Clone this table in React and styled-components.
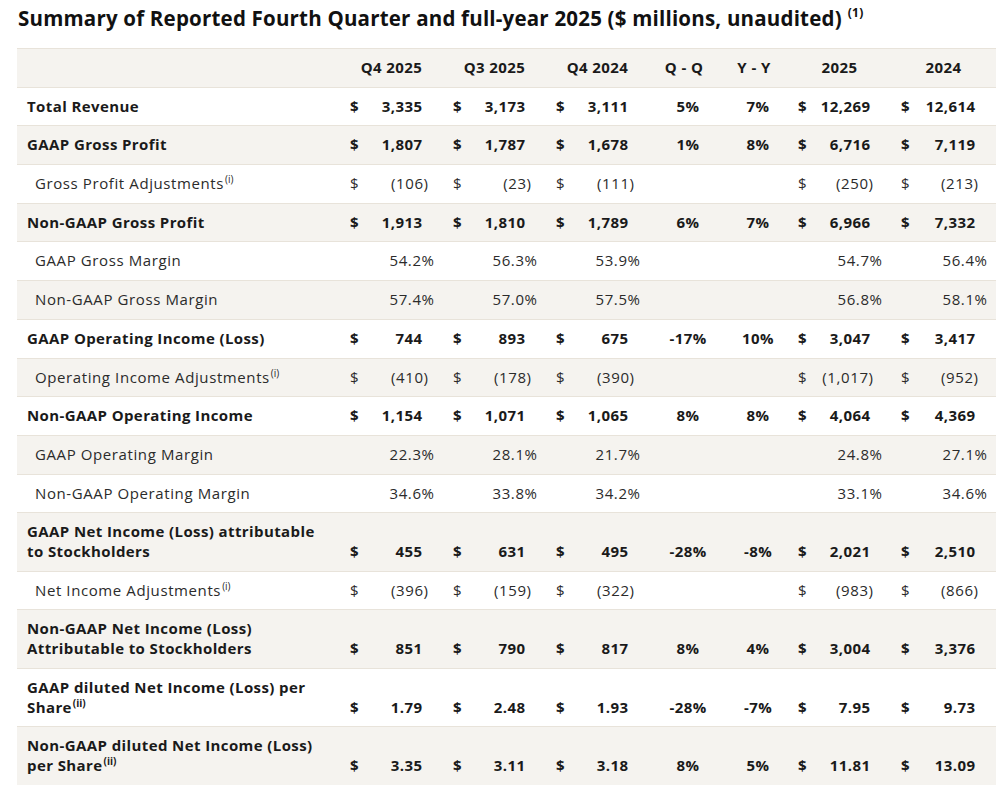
import React from "react";
import styled, { createGlobalStyle } from "styled-components";

const Global = createGlobalStyle`
  html, body { margin: 0; padding: 0; background: #ffffff; }
  body { font-family: "Open Sans", "Noto Sans", sans-serif; color: #1f1f1f; }
`;

const Page = styled.div`
  padding: 6px 12px 0 17px;
`;

const Title = styled.h2`
  margin: 0 0 0 1px;
  font-size: 20.5px;
  line-height: 24px;
  font-weight: 700;
  color: #111;
  letter-spacing: 0.2px;
  height: 42px;
`;

const TitleSup = styled.sup`
  font-size: 12px;
  margin-left: 6px;
  vertical-align: 9px;
  line-height: 0;
`;

const Table = styled.div`
  width: 979px;
  border-top: 1px solid #e8e3da;
`;

const Row = styled.div`
  display: grid;
  grid-template-columns: 323px 103px 103px 103px 70px 69px 103px 105px;
  align-items: end;
  background: ${(p) => (p.$shaded ? "#f5f3ef" : "#ffffff")};
  border-bottom: ${(p) => (p.$last ? "none" : "1px solid #e8e3da")};
  padding: 9px 0 8.9px;
  font-size: 15px;
  line-height: 19.8px;
  letter-spacing: ${(p) => (p.$bold ? "0.4px" : "0.6px")};
  font-weight: ${(p) => (p.$bold ? 700 : 400)};
  color: ${(p) => (p.$bold ? "#1a1a1a" : "#2b2b2b")};
`;

const Label = styled.div`
  padding-left: ${(p) => (p.$indent ? "18px" : "10px")};
`;

const Sup = styled.sup`
  font-size: 10px;
  line-height: 0;
  vertical-align: 6px;
  margin-left: 1px;
  letter-spacing: 0;
`;

const HeadCell = styled.div`
  text-align: center;
  font-weight: 700;
  padding-left: ${(p) => p.$shift || 0}px;
`;

const Group = styled.div`
  display: flex;
  justify-content: space-between;
  padding-left: 10px;
  padding-right: ${(p) =>
    p.$kind === "pct" ? 9 : p.$kind === "paren" ? p.$parenPad : 21}px;
`;

const Dollar = styled.span``;

const Value = styled.span`
  margin-left: auto;
  margin-right: ${(p) => (p.$bold ? "-0.4px" : "-0.6px")};
`;

const Change = styled.div`
  text-align: center;
  padding-left: ${(p) => p.$shift}px;
`;

const rows = [
  { label: "Total Revenue", bold: true, q: ["3,335", "3,173", "3,111"], qq: "5%", yy: "7%", y: ["12,269", "12,614"] },
  { label: "GAAP Gross Profit", bold: true, q: ["1,807", "1,787", "1,678"], qq: "1%", yy: "8%", y: ["6,716", "7,119"] },
  { label: "Gross Profit Adjustments", sup: "(i)", kind: "paren", q: ["(106)", "(23)", "(111)"], y: ["(250)", "(213)"] },
  { label: "Non-GAAP Gross Profit", bold: true, q: ["1,913", "1,810", "1,789"], qq: "6%", yy: "7%", y: ["6,966", "7,332"] },
  { label: "GAAP Gross Margin", kind: "pct", q: ["54.2%", "56.3%", "53.9%"], y: ["54.7%", "56.4%"] },
  { label: "Non-GAAP Gross Margin", kind: "pct", q: ["57.4%", "57.0%", "57.5%"], y: ["56.8%", "58.1%"] },
  { label: "GAAP Operating Income (Loss)", bold: true, q: ["744", "893", "675"], qq: "-17%", yy: "10%", y: ["3,047", "3,417"] },
  { label: "Operating Income Adjustments", sup: "(i)", kind: "paren", q: ["(410)", "(178)", "(390)"], y: ["(1,017)", "(952)"] },
  { label: "Non-GAAP Operating Income", bold: true, q: ["1,154", "1,071", "1,065"], qq: "8%", yy: "8%", y: ["4,064", "4,369"] },
  { label: "GAAP Operating Margin", kind: "pct", q: ["22.3%", "28.1%", "21.7%"], y: ["24.8%", "27.1%"] },
  { label: "Non-GAAP Operating Margin", kind: "pct", q: ["34.6%", "33.8%", "34.2%"], y: ["33.1%", "34.6%"] },
  { label: ["GAAP Net Income (Loss) attributable", "to Stockholders"], bold: true, q: ["455", "631", "495"], qq: "-28%", yy: "-8%", y: ["2,021", "2,510"] },
  { label: "Net Income Adjustments", sup: "(i)", kind: "paren", q: ["(396)", "(159)", "(322)"], y: ["(983)", "(866)"] },
  { label: ["Non-GAAP Net Income (Loss)", "Attributable to Stockholders"], bold: true, q: ["851", "790", "817"], qq: "8%", yy: "4%", y: ["3,004", "3,376"] },
  { label: ["GAAP diluted Net Income (Loss) per", "Share"], sup: "(ii)", bold: true, q: ["1.79", "2.48", "1.93"], qq: "-28%", yy: "-7%", y: ["7.95", "9.73"] },
  { label: ["Non-GAAP diluted Net Income (Loss)", "per Share"], sup: "(ii)", bold: true, q: ["3.35", "3.11", "3.18"], qq: "8%", yy: "5%", y: ["11.81", "13.09"] },
];

function LabelText({ label, sup }) {
  const lines = Array.isArray(label) ? label : [label];
  return (
    <>
      {lines.map((l, i) => (
        <React.Fragment key={i}>
          {i > 0 && <br />}
          {l}
        </React.Fragment>
      ))}
      {sup && <Sup>{sup}</Sup>}
    </>
  );
}

function Money({ value, kind, parenPad, bold }) {
  return (
    <Group $kind={kind} $parenPad={parenPad}>
      {kind !== "pct" && <Dollar>$</Dollar>}
      <Value $bold={bold}>{value}</Value>
    </Group>
  );
}

export default function App() {
  return (
    <>
      <Global />
      <Page>
        <Title>
          Summary of Reported Fourth Quarter and full-year 2025 ($ millions, unaudited)
          <TitleSup>(1)</TitleSup>
        </Title>
        <Table>
          <Row $shaded $bold>
            <div />
            <HeadCell>Q4 2025</HeadCell>
            <HeadCell>Q3 2025</HeadCell>
            <HeadCell>Q4 2024</HeadCell>
            <HeadCell $shift={-1}>Q - Q</HeadCell>
            <HeadCell $shift={1}>Y - Y</HeadCell>
            <HeadCell>2025</HeadCell>
            <HeadCell>2024</HeadCell>
          </Row>
          {rows.map((r, i) => (
            <Row key={i} $shaded={i % 2 === 1} $bold={r.bold} $last={i === rows.length - 1}>
              <Label $indent={!r.bold}>
                <LabelText label={r.label} sup={r.sup} />
              </Label>
              {r.q.map((v, j) => (
                <Money key={j} value={v} kind={r.kind} parenPad={15} bold={r.bold} />
              ))}
              <Change $shift={8}>{r.qq || ""}</Change>
              <Change $shift={9}>{r.yy || ""}</Change>
              {r.y.map((v, j) => (
                <Money key={j} value={v} kind={r.kind} parenPad={18} bold={r.bold} />
              ))}
            </Row>
          ))}
        </Table>
      </Page>
    </>
  );
}
